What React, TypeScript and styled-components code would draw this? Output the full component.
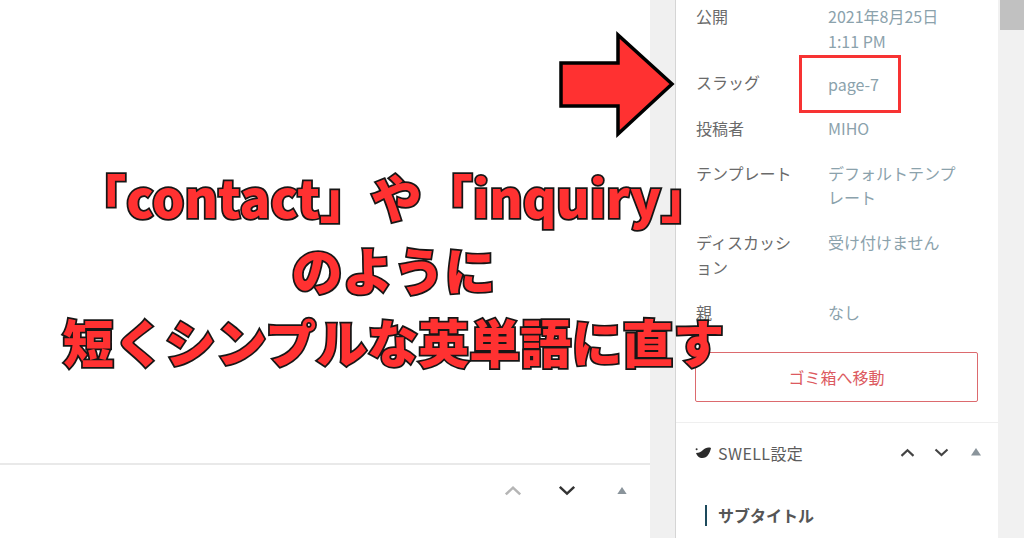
import React from 'react';
import styled, { createGlobalStyle } from 'styled-components';

const GlobalStyle = createGlobalStyle`
  html, body {
    margin: 0;
    padding: 0;
    background: #fff;
    overflow: hidden;
  }
  body {
    font-family: "Noto Sans CJK JP", "Noto Sans", sans-serif;
  }
`;

const Page = styled.div`
  position: relative;
  display: grid;
  grid-template-columns: 650px 25px 323px 26px;
  width: 1024px;
  height: 538px;
  overflow: hidden;
`;

const Main = styled.main`
  display: flex;
  flex-direction: column;
  justify-content: flex-end;
`;

const MainFooter = styled.div`
  display: flex;
  align-items: center;
  justify-content: flex-end;
  gap: 36px;
  height: 75px;
  padding: 0 23px 22px 0;
  box-sizing: border-box;
  border-top: 2px solid #e9e9e9;
`;

const Gutter = styled.div`
  background: #f0f0f0;
`;

const Sidebar = styled.aside`
  display: flex;
  flex-direction: column;
  border-left: 1px solid #d5d5d5;
  background: #fff;
`;

const Rows = styled.div`
  display: flex;
  flex-direction: column;
  gap: 20.5px;
  padding: 4px 20px 0 20px;
`;

const Row = styled.div<{ $pull?: number }>`
  display: grid;
  grid-template-columns: 132px 1fr;
  margin-top: ${(p) => p.$pull ?? 0}px;
  font-size: 16px;
  line-height: 24.5px;
`;

const Label = styled.div`
  color: #6a6a6a;
`;

const Value = styled.div`
  position: relative;
  color: #8ba2ac;
`;

const SlugValue = styled(Value)`
  padding-top: 2px;
`;

const SlugBox = styled.span`
  position: absolute;
  left: -29px;
  top: -15px;
  width: 102px;
  height: 58px;
  box-sizing: border-box;
  border: 3px solid #f73333;
`;

const TrashButton = styled.div`
  display: flex;
  align-items: center;
  justify-content: center;
  height: 50px;
  margin: 28px 20px 20px 19px;
  box-sizing: border-box;
  border: 1.5px solid #dc6a6e;
  border-radius: 2px;
  color: #dc5a60;
  font-size: 16px;
`;

const PanelHeader = styled.div`
  display: flex;
  align-items: center;
  height: 60px;
  padding: 0 17px 0 19px;
  border-top: 1px solid #efefef;
  color: #5c5c5c;
  font-size: 16px;
`;

const PanelTitle = styled.span`
  display: flex;
  align-items: center;
  gap: 6px;
  flex: 1;
  letter-spacing: 0.4px;
`;

const PanelControls = styled.div`
  display: flex;
  align-items: center;
  gap: 19px;
  padding-bottom: 2px;
`;

const TriangleSlot = styled.span<{ $gap: number }>`
  display: flex;
  margin-left: ${(p) => p.$gap}px;
`;

const SubTitle = styled.div`
  margin: 22px 0 0 29px;
  padding-left: 11px;
  height: 21px;
  border-left: 2px solid #1d4a5c;
  color: #555;
  font-size: 16px;
  font-weight: 700;
  line-height: 21px;
`;

const Scrollbar = styled.div`
  background: #f1f1f1;
  padding-left: 2px;
`;

const Thumb = styled.div`
  height: 30px;
  background: #c1c1c1;
`;

const Arrow = styled.svg`
  position: absolute;
  left: 557px;
  top: 30px;
`;

const Heading = styled.h1`
  position: absolute;
  left: 0;
  top: 160px;
  width: 787px;
  margin: 0;
  color: #ff3131;
  font-family: "Noto Sans CJK JP", "Noto Sans", sans-serif;
  font-size: 51px;
  font-weight: 900;
  line-height: 72.5px;
  text-align: center;
  white-space: nowrap;
  -webkit-text-stroke: 3.5px #161616;
  paint-order: stroke fill;
`;

const Chevron = ({ up, color, size = 18 }: { up?: boolean; color: string; size?: number }) => (
  <svg width={size} height={size * 0.6} viewBox="0 0 20 12" fill="none">
    <path
      d={up ? 'M2 10.5 10 3l8 7.5' : 'M2 2l8 7.5L18 2'}
      stroke={color}
      strokeWidth="2.8"
    />
  </svg>
);

const Triangle = ({ size = 10 }: { size?: number }) => (
  <svg width={size} height={size * 0.75} viewBox="0 0 12 9">
    <path d="M6 0l6 9H0z" fill="#8a949b" />
  </svg>
);

const SwellLogo = () => (
  <svg width="17" height="12" viewBox="0 0 17 12">
    <circle cx="1.6" cy="2.2" r="1" fill="#333" />
    <path d="M1 6c3 0 5-1 7-3s5-3 8-2c-1 5-4 11-10 10C4 10.500 2 9 1 6z" fill="#2b2b2b" />
  </svg>
);

export default function App() {
  return (
    <Page>
      <GlobalStyle />
      <Main>
        <MainFooter>
          <Chevron up color="#b5b5b5" />
          <Chevron color="#333" />
          <TriangleSlot $gap={5}>
            <Triangle />
          </TriangleSlot>
        </MainFooter>
      </Main>
      <Gutter />
      <Sidebar>
        <Rows>
          <Row>
            <Label>公開</Label>
            <Value>
              2021年8月25日
              <br />
              1:11 PM
            </Value>
          </Row>
          <Row $pull={-4}>
            <Label>スラッグ</Label>
            <SlugValue>
              page-7
              <SlugBox />
            </SlugValue>
          </Row>
          <Row $pull={-1}>
            <Label>投稿者</Label>
            <Value>MIHO</Value>
          </Row>
          <Row>
            <Label>テンプレート</Label>
            <Value>
              デフォルトテンプ
              <br />
              レート
            </Value>
          </Row>
          <Row>
            <Label>
              ディスカッシ
              <br />
              ョン
            </Label>
            <Value>受け付けません</Value>
          </Row>
          <Row>
            <Label>親</Label>
            <Value>なし</Value>
          </Row>
        </Rows>
        <TrashButton>ゴミ箱へ移動</TrashButton>
        <PanelHeader>
          <PanelTitle>
            <SwellLogo />
            SWELL設定
          </PanelTitle>
          <PanelControls>
            <Chevron up color="#444" size={15} />
            <Chevron color="#444" size={15} />
            <TriangleSlot $gap={3}>
              <Triangle />
            </TriangleSlot>
          </PanelControls>
        </PanelHeader>
        <SubTitle>サブタイトル</SubTitle>
      </Sidebar>
      <Scrollbar>
        <Thumb />
      </Scrollbar>
      <Arrow width="120" height="110" viewBox="0 0 120 110">
        <path
          d="M4 33h57V5l54 49-54 50V76H4z"
          fill="#ff3131"
          stroke="#000"
          strokeWidth="3.5"
        />
      </Arrow>
      <Heading>
        「contact」や「inquiry」
        <br />
        のように
        <br />
        短くシンプルな英単語に直す
      </Heading>
    </Page>
  );
}
